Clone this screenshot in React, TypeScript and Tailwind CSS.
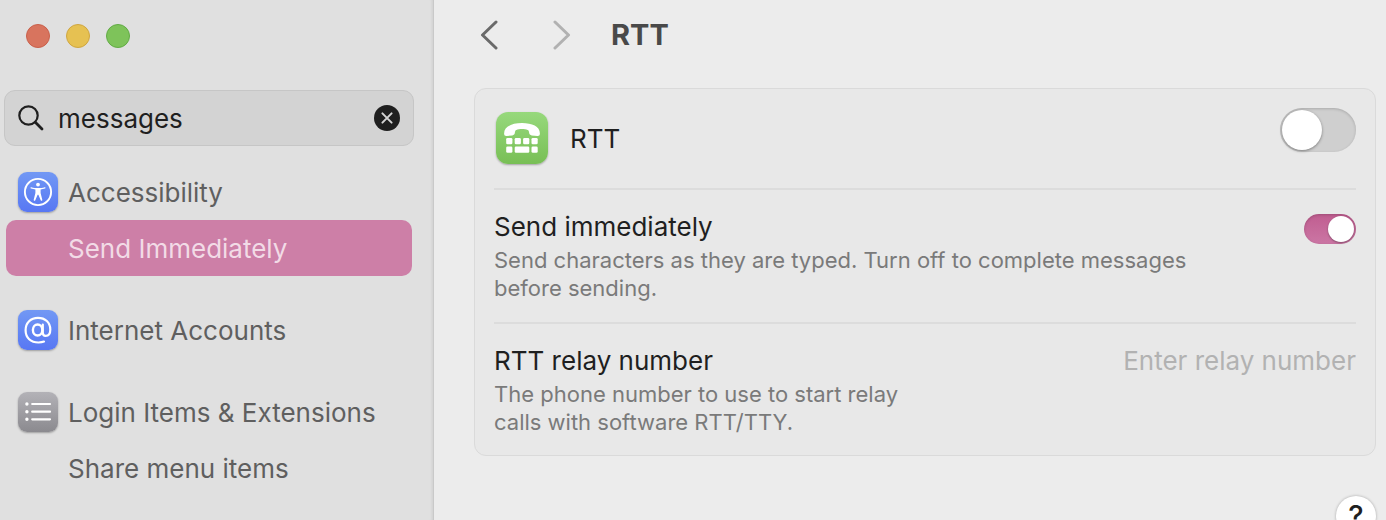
import { useState, type ReactNode } from "react";
import clsx from "clsx";

function SearchIcon() {
  return (
    <svg width="26" height="26" viewBox="0 0 26 26" fill="none" stroke="#1f1f1f" strokeLinecap="round">
      <circle cx="10.5" cy="10.5" r="9.2" strokeWidth="2.2" />
      <path d="M17.3 17.3 24 24" strokeWidth="2.8" />
    </svg>
  );
}

function ClearIcon() {
  return (
    <svg width="26" height="26" viewBox="0 0 26 26" fill="none">
      <circle cx="13" cy="13" r="13" fill="#1f1f1f" />
      <path d="m8.400 8.400 9.200 9.200m0-9.200-9.200 9.200" stroke="#d4d4d4" strokeWidth="2" strokeLinecap="round" />
    </svg>
  );
}

function AccessibilityIcon() {
  return (
    <svg width="40" height="40" viewBox="0 0 40 40" fill="none">
      <circle cx="20" cy="20" r="13.1" stroke="#fff" strokeWidth="1.9" />
      <circle cx="20" cy="12.6" r="1.9" fill="#fff" />
      <path
        d="M13.3 15.2c2.2.6 4.2.9 6.7.9s4.5-.3 6.7-.9c1-.2 1.2 1 .3 1.3-1.5.5-2.900.8-4.400 1v3.500l1.700 6.800c.2 1.100-1.200 1.500-1.600.5L20.400 22.700h-.8l-2.300 5.600c-.4 1-1.800.6-1.600-.5l1.700-6.800v-3.500c-1.500-.2-2.900-.5-4.400-1-.9-.3-.7-1.500.3-1.300Z"
        fill="#fff"
      />
    </svg>
  );
}

function AtIcon() {
  return (
    <svg width="40" height="40" viewBox="0 0 40 40" fill="none" stroke="#fff" strokeLinecap="round">
      <ellipse cx="19.6" cy="20" rx="4.700" ry="5.500" strokeWidth="2.4" />
      <path
        d="M24.8 14.5v8c0 2.200 1 3.400 2.900 3.400 2.900 0 4.600-2.700 4.600-6.400C32.300 12.400 27.200 7.800 20 7.800 12.700 7.800 7.600 12.800 7.600 20.200c0 7.600 5.200 12.300 12.900 12.300 2.200 0 4.100-.3 5.500-.9"
        strokeWidth="2.2"
      />
    </svg>
  );
}

function ListIcon() {
  return (
    <svg width="40" height="40" viewBox="0 0 40 40" fill="none" stroke="#fff" strokeLinecap="round">
      <path d="M14.2 12H32M14.2 19.700H32M14.2 27.300H32" strokeWidth="2.2" />
      <path d="M8.900 12h.01M8.900 19.700h.01M8.900 27.300h.01" strokeWidth="3.4" />
    </svg>
  );
}

function TeletypeIcon() {
  return (
    <svg width="52" height="52" viewBox="0 0 52 52" fill="#fff">
      <path d="M8.1 21.500C8.100 14.500 16 11.100 26 11.100s17.900 3.400 17.900 10.400c0 1.800-.8 2.600-2.500 2.500l-5.700-.6c-1.600-.2-2.300-.9-2.500-2.300l-.3-1.600c-.1-.8-.5-1.200-1.200-1.500-1.500-.6-3.500-.9-5.700-.9s-4.200.3-5.700.9c-.7.3-1.100.7-1.200 1.500l-.3 1.600c-.2 1.400-.9 2.100-2.500 2.300l-5.700.6c-1.700.1-2.500-.7-2.500-2.500Z" />
      <rect x="10.2" y="26" width="6.200" height="6.200" rx="1.300" />
      <rect x="18.7" y="26" width="6.200" height="6.200" rx="1.300" />
      <rect x="27.1" y="26" width="6.200" height="6.200" rx="1.300" />
      <rect x="35.5" y="26" width="6.200" height="6.200" rx="1.300" />
      <rect x="10.2" y="34.500" width="6.200" height="6.200" rx="1.300" />
      <rect x="18.7" y="34.500" width="14.600" height="6.200" rx="1.300" />
      <rect x="35.5" y="34.500" width="6.200" height="6.200" rx="1.300" />
    </svg>
  );
}

function ChevronIcon({ d }: { d: string }) {
  return (
    <svg width="18" height="30" viewBox="0 0 18 30" fill="none" stroke="currentColor" strokeWidth="3" strokeLinecap="round" strokeLinejoin="round">
      <path d={d} />
    </svg>
  );
}

function SidebarItem({ label, icon, iconClass, active }: { label: string; icon?: ReactNode; iconClass?: string; active?: boolean }) {
  return (
    <a
      href="#"
      className={clsx(
        "flex h-14 items-center gap-2.5 rounded-[10px] pl-3 text-[26px] leading-8",
        active ? "bg-[#cd7fa7] text-[#f2dbe6]" : "text-[#5f5f5f]"
      )}
    >
      <span className={clsx("size-10 shrink-0 rounded-[9px]", icon && "shadow-[0_1px_2px_rgba(0,0,0,0.3)]", iconClass)}>{icon}</span>
      <span className="pt-0.5 whitespace-nowrap">{label}</span>
    </a>
  );
}

export default function App() {
  const [query, setQuery] = useState("messages");
  const [rtt, setRtt] = useState(false);
  const [sendNow, setSendNow] = useState(true);

  return (
    <div className="flex h-screen overflow-hidden bg-[#ececec] font-['Inter',sans-serif] text-[#1f1f1f]">
      {/* Sidebar */}
      <aside className="w-[434px] shrink-0 border-r border-[#c9c9c9] bg-[#e0e0e0] shadow-[inset_-3px_0_3px_-2px_rgba(0,0,0,0.08)]">
        <div className="flex gap-4 px-[26px] pt-6">
          <button aria-label="Close" className="size-6 rounded-full border border-[#c9604b] bg-[#d8745e]" />
          <button aria-label="Minimize" className="size-6 rounded-full border border-[#cfa641] bg-[#e6c152]" />
          <button aria-label="Zoom" className="size-6 rounded-full border border-[#62ab45] bg-[#7ec35a]" />
        </div>

        <div className="mt-[42px] mr-[19px] ml-1 flex h-14 items-center gap-3.5 rounded-[11px] border border-[#c6c6c6] bg-[#d3d3d3] px-[13px]">
          <SearchIcon />
          <input
            aria-label="Search"
            value={query}
            onChange={(e) => setQuery(e.target.value)}
            className="min-w-0 flex-1 bg-transparent pt-0.5 text-[26px] leading-8 outline-none"
          />
          <button aria-label="Clear search" onClick={() => setQuery("")}>
            <ClearIcon />
          </button>
        </div>

        <nav className="mt-[18px] mr-[21px] ml-1.5 flex flex-col gap-[26px]">
          <div>
            <SidebarItem label="Accessibility" icon={<AccessibilityIcon />} iconClass="bg-linear-to-b from-[#7298f4] to-[#5877f3]" />
            <SidebarItem label="Send Immediately" active />
          </div>
          <SidebarItem label="Internet Accounts" icon={<AtIcon />} iconClass="bg-linear-to-b from-[#7298f4] to-[#5877f3]" />
          <div>
            <SidebarItem label="Login Items & Extensions" icon={<ListIcon />} iconClass="bg-linear-to-b from-[#b3b2b7] to-[#8b8a8f]" />
            <SidebarItem label="Share menu items" />
          </div>
        </nav>
      </aside>

      {/* Detail pane */}
      <main className="min-w-0 flex-1 pr-2.5 pl-10">
        <header className="flex h-[88px] items-center pb-[18px] pl-1.5">
          <button aria-label="Back" className="text-[#6a6a6a]">
            <ChevronIcon d="M16 2 2.500 15 16 28" />
          </button>
          <button aria-label="Forward" className="ml-[55px] text-[#b1b1b1]">
            <ChevronIcon d="M2 2 15.500 15 2 28" />
          </button>
          <h1 className="ml-10 text-[29px] leading-9 font-bold text-[#494949]">RTT</h1>
        </header>

        <section className="rounded-xl border border-[#dadada] bg-[#e8e8e8] px-[19px]">
          <div className="flex h-[99px] items-center gap-[22px] pb-px">
            <span className="ml-0.5 rounded-xl bg-linear-to-b from-[#97d97c] to-[#78bf55] shadow-[0_1px_2px_rgba(0,0,0,0.3)]">
              <TeletypeIcon />
            </span>
            <label htmlFor="rtt" className="pt-0.5 text-[26px] leading-8">
              RTT
            </label>
            <span className="relative mb-4 ml-auto flex">
              <input
                id="rtt"
                type="checkbox"
                role="switch"
                checked={rtt}
                onChange={(e) => setRtt(e.target.checked)}
                className="peer h-11 w-[76px] appearance-none rounded-full bg-[#cfcfcf] shadow-[inset_0_1px_3px_rgba(0,0,0,0.18)] checked:bg-[#c2649a]"
              />
              <span className="pointer-events-none absolute top-0.5 left-0.5 size-10 rounded-full bg-white shadow-[0_1px_3px_rgba(0,0,0,0.4)] peer-checked:left-[34px]" />
            </span>
          </div>

          <div className="flex items-start justify-between border-t-2 border-[#dcdcdc] pt-[21px] pb-5">
            <div className="max-w-[720px]">
              <label htmlFor="send" className="block text-[26px] leading-8">
                Send immediately
              </label>
              <p className="mt-[3px] text-[22px] leading-7 text-[#7a7a7a]">
                Send characters as they are typed. Turn off to complete messages before sending.
              </p>
            </div>
            <span className="relative mt-[3px] flex">
              <input
                id="send"
                type="checkbox"
                role="switch"
                checked={sendNow}
                onChange={(e) => setSendNow(e.target.checked)}
                className="peer h-[30px] w-[52px] appearance-none rounded-full bg-[#cfcfcf] shadow-[inset_0_1px_3px_rgba(0,0,0,0.18)] checked:bg-linear-to-b checked:from-[#c05d90] checked:to-[#cb76a4]"
              />
              <span className="pointer-events-none absolute top-0.5 left-0.5 size-[26px] rounded-full bg-white shadow-[0_1px_2px_rgba(0,0,0,0.35)] peer-checked:left-6" />
            </span>
          </div>

          <div className="flex items-start justify-between border-t-2 border-[#dcdcdc] pt-[21px] pb-[19px]">
            <div className="max-w-[430px]">
              <label htmlFor="relay" className="block text-[26px] leading-8">
                RTT relay number
              </label>
              <p className="mt-[3px] text-[22px] leading-7 text-[#7a7a7a]">
                The phone number to use to start relay calls with software RTT/TTY.
              </p>
            </div>
            <input
              id="relay"
              type="tel"
              placeholder="Enter relay number"
              className="w-[300px] bg-transparent text-right text-[26px] leading-8 outline-none placeholder:text-[#b2b2b2]"
            />
          </div>
        </section>

        <div className="mt-10 flex justify-end">
          <button aria-label="Help" className="size-10 rounded-full bg-white text-[29px] leading-9 font-medium shadow-[0_0_3px_rgba(0,0,0,0.3)]">
            ?
          </button>
        </div>
      </main>
    </div>
  );
}
